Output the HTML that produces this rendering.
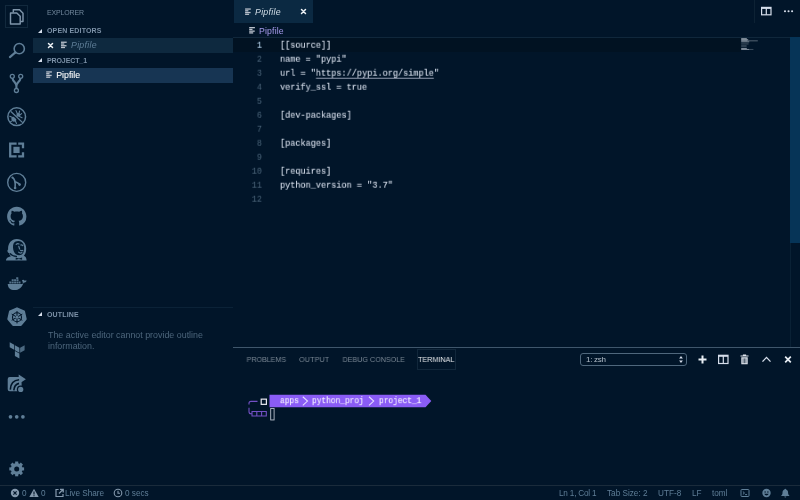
<!DOCTYPE html>
<html lang="en">
<head>
<meta charset="utf-8">
<title>Pipfile — project_1</title>
<style>
*{box-sizing:border-box;margin:0;padding:0}
html,body{width:800px;height:500px;overflow:hidden;background:#011529}
body{position:relative;font-family:"Liberation Sans",sans-serif;color:#5f7e97;font-size:8.7px;-webkit-font-smoothing:antialiased}
.abs{position:absolute}
.t{position:absolute;white-space:nowrap;line-height:1;will-change:transform;z-index:2}
svg{position:absolute;overflow:visible}
/* activity bar */
#act{left:0;top:0;width:33px;height:485px}
.focus{left:5px;top:5px;width:23px;height:23px;border:1px solid #12293d}
/* sidebar */
.hdr{font-weight:bold;font-size:7px;letter-spacing:.15px;color:#7c91a7}
.row{left:33px;width:200px;height:15px}
.tri{width:0;height:0;border-left:4px solid transparent;border-bottom:4px solid #d6deeb}
/* editor */
.code{font-family:"Liberation Mono",monospace;font-size:9.6px;color:#d6deeb;transform-origin:0 0;transform:translateY(.7px) scaleX(.8905);line-height:14px;height:14px;left:280px;-webkit-text-stroke:.12px #d6deeb}
.ln{font-family:"Liberation Mono",monospace;font-size:9.6px;color:#4b6479;transform-origin:100% 0;transform:translateY(.7px) scaleX(.8905);line-height:14px;height:14px;width:30px;text-align:right;left:232px}
/* panel */
.ptab{font-size:7.8px;color:#7a8794;top:355.900px;transform-origin:0 0;transform:scaleX(.92)}
/* terminal */
.tt{top:394px;height:14px;line-height:14px;font-family:"Liberation Mono",monospace;font-size:9.4px;color:#f4f0ff;transform-origin:0 0;transform:translateY(.15px) scaleX(.835);-webkit-text-stroke:.15px #f4f0ff}
/* status */
.st{top:490.200px;font-size:8.2px;color:#5f7e97}
</style>
</head>
<body>

<!-- ============ ACTIVITY BAR ============ -->
<div id="act" class="abs">
  <div class="abs focus"></div>
  <!-- explorer -->
  
  <!-- search -->
  
  <!-- scm -->
  
  <!-- debug -->
  
  <!-- extensions -->
  
  <!-- git graph -->
  
  <!-- github -->
  
  <!-- jenkins -->
  
  <!-- docker -->
  
  <!-- kubernetes -->
  
  <!-- terraform -->
  
  <!-- live share -->
  
  <!-- ellipsis -->
  
  <!-- gear -->
  
</div>

<!-- ============ SIDEBAR ============ -->
<div class="t" style="left:47px;top:8px;transform:translateY(.5px);font-size:7px;color:#72889d;letter-spacing:-.15px">EXPLORER</div>

<div class="abs tri" style="left:38.300px;top:28.700px"></div>
<div class="t hdr" style="left:47px;top:27.200px">OPEN EDITORS</div>
<div class="abs row" style="top:38.400px;height:14.600px;background:#0e293f"></div>

<div class="t" style="left:70.800px;top:41.400px;font-style:italic;color:#5f7e97;font-size:8.800px;letter-spacing:.26px">Pipfile</div>

<div class="abs tri" style="left:38.300px;top:58.200px"></div>
<div class="t hdr" style="left:47px;top:56.900px;letter-spacing:-.1px">PROJECT_1</div>
<div class="abs row" style="top:68px;height:14.800px;background:#173553"></div>

<div class="t" style="left:56px;top:71px;transform:translate(.2px,.4px);color:#ffffff;font-size:8.800px;-webkit-text-stroke:.08px #fff">Pipfile</div>

<div class="abs" style="left:33px;top:306.500px;width:200px;height:1px;background:#0b2237"></div>
<div class="abs tri" style="left:38px;top:312.400px"></div>
<div class="t hdr" style="left:47px;top:311.400px">OUTLINE</div>
<div class="t" style="left:48px;top:331px;font-size:8.900px;color:#4d667c">The active editor cannot provide outline</div>
<div class="t" style="left:48px;top:342.400px;font-size:8.900px;color:#4d667c">information.</div>

<!-- ============ EDITOR TABS ============ -->
<div class="abs" style="left:233.500px;top:0;width:79.500px;height:23.200px;background:#0b2942"></div>

<div class="t" style="left:255px;top:7.700px;font-style:italic;color:#d2dee7;font-size:8.800px;letter-spacing:.27px">Pipfile</div>

<!-- editor actions -->
<div class="abs" style="left:754px;top:0;width:1px;height:23px;background:#0d2234"></div>

<!-- breadcrumb -->

<div class="t" style="left:258.800px;top:26.800px;color:#a599e9;font-size:8.700px;letter-spacing:.17px">Pipfile</div>
<div class="abs" style="left:233px;top:37px;width:567px;height:1px;background:#10273b"></div>

<!-- ============ EDITOR ============ -->
<div class="abs" style="left:233px;top:38px;width:507.500px;height:14px;background:#011222"></div>
<div class="abs" style="left:789.500px;top:37px;width:1px;height:310px;background:#0a2135"></div>
<div class="abs" style="left:790px;top:37px;width:10px;height:206px;background:#063457"></div>

<div class="t ln" style="top:38px;color:#c5e4fd">1</div>
<div class="t ln" style="top:52px">2</div>
<div class="t ln" style="top:66px">3</div>
<div class="t ln" style="top:80px">4</div>
<div class="t ln" style="top:94px">5</div>
<div class="t ln" style="top:108px">6</div>
<div class="t ln" style="top:122px">7</div>
<div class="t ln" style="top:136px">8</div>
<div class="t ln" style="top:150px">9</div>
<div class="t ln" style="top:164px">10</div>
<div class="t ln" style="top:178px">11</div>
<div class="t ln" style="top:192px">12</div>

<div class="t code" style="top:38px">[[source]]</div>
<div class="t code" style="top:52px">name = "pypi"</div>
<div class="t code" style="top:66px">url = "<span style="text-decoration:underline;text-decoration-color:#939db0;text-decoration-thickness:1.300px;text-underline-offset:2.200px">https://pypi.org/simple</span>"</div>
<div class="t code" style="top:80px">verify_ssl = true</div>
<div class="t code" style="top:108px">[dev-packages]</div>
<div class="t code" style="top:136px">[packages]</div>
<div class="t code" style="top:164px">[requires]</div>
<div class="t code" style="top:178px">python_version = "3.7"</div>

<!-- text cursor (I-beam mouse) -->
<div class="abs" style="left:300px;top:82px;width:1px;height:9px;background:#0a1a28;opacity:.7"></div>

<!-- minimap -->

<!-- ============ PANEL ============ -->
<div class="abs" style="left:233px;top:346.500px;width:567px;height:1px;background:#3f566b"></div>
<div class="t ptab" style="left:246px;transform:translateX(.6px) scaleX(.92);letter-spacing:-.07px">PROBLEMS</div>
<div class="t ptab" style="left:299px;letter-spacing:.14px">OUTPUT</div>
<div class="t ptab" style="left:342px;transform:translateX(.6px) scaleX(.92);letter-spacing:-.02px">DEBUG CONSOLE</div>
<div class="abs" style="left:417px;top:349px;width:38.700px;height:20.500px;border:1px solid #11273b"></div>
<div class="t ptab" style="left:418.200px;color:#e7e9ec;letter-spacing:.02px">TERMINAL</div>

<div class="abs" style="left:580px;top:353px;width:107px;height:13px;border:1px solid #4f677c;border-radius:3px;background:#011529"></div>
<div class="t" style="left:586px;top:355.600px;font-size:8px;color:#b4bfca;letter-spacing:-.3px">1: zsh</div>

<!-- terminal prompt -->

<div class="t tt" style="left:279.700px">apps</div>
<div class="t tt" style="left:312.300px">python_proj</div>
<div class="t tt" style="left:378.500px">project_1</div>

<!-- ============ STATUS BAR ============ -->
<div class="abs" style="left:0;top:485px;width:800px;height:1px;background:#1a2b3b"></div>

<div class="t st" style="left:21.500px">0</div>

<div class="t st" style="left:40.500px">0</div>

<div class="t st" style="left:64.500px">Live Share</div>

<div class="t st" style="left:124.500px">0 secs</div>

<div class="t st" style="left:559px;letter-spacing:-.2px">Ln 1, Col 1</div>
<div class="t st" style="left:607px">Tab Size: 2</div>
<div class="t st" style="left:657.500px">UTF-8</div>
<div class="t st" style="left:692px">LF</div>
<div class="t st" style="left:712px">toml</div>

<svg width="800" height="500" viewBox="0 0 800 500" style="left:0;top:0;pointer-events:none;z-index:1">
<g transform="translate(0 0)" fill="none" stroke="#7f95aa" stroke-width="1.450" stroke-linejoin="round">
    <path d="M13.300 12.400V9.800h6.300l3.400 3.400v8.300h-2.700"/>
    <path d="M10.500 12.900h6.300l3.400 3.400v7.600h-9.700z"/>
  </g>
<g transform="translate(0 33)" fill="none" stroke="#5f7e97" stroke-width="1.600" stroke-linecap="round">
    <circle cx="19.250" cy="15.650" r="5.100"/><path d="M15.400 19.400L9.900 24.100" stroke-width="2.100"/>
  </g>
<g transform="translate(0 66)" fill="none" stroke="#5f7e97" stroke-width="1.300">
    <circle cx="12.300" cy="10.300" r="2"/><circle cx="20.700" cy="10.300" r="2"/><circle cx="16.400" cy="24.500" r="2"/>
    <path d="M12.500 12.400c.5 3.600 3.900 4 3.900 7.600v2.400M20.500 12.400c-.5 3.600-4.100 4-4.100 7.600" stroke-width="2.100"/>
  </g>
<g transform="translate(0 99)" fill="none" stroke="#5f7e97" stroke-width="1.500">
    <circle cx="16.700" cy="17.700" r="8.850"/>
    <ellipse cx="13.900" cy="20.100" rx="2.300" ry="2.700" transform="rotate(-35 13.900 20.100)" fill="#5f7e97" stroke="none"/>
    <circle cx="18.300" cy="15.900" r="1.900" fill="#5f7e97" stroke="none"/>
    <path d="M17.600 15.200l-1.600-3.600M18.800 15l.8-3M19.600 16.200l2-1.600M19.400 17.400l2.700 1.300M12.600 18.600l-2.800-1.400M12.400 21.600l-1.800 1.200M15.200 21.600l1.300 2.800" stroke-width="1.100" stroke-linecap="round"/>
    <path d="M10.100 13.500l11.600 11" stroke="#011529" stroke-width="1.100"/>
    <path d="M10.900 12.500l11.700 11.100" stroke-width="1.300"/>
  </g>
<g transform="translate(0 132)" fill="none" stroke="#5f7e97">
    <path d="M16.600 11.600H10.200V24.300H16.600M18.200 11.600h4.800v4.600M23 20.200v4.100h-4.800" stroke-width="2.300"/>
    <rect x="13.400" y="14.800" width="6.200" height="6.200" fill="#5f7e97" stroke="none"/>
  </g>
<g transform="translate(0 165)" fill="none" stroke="#5f7e97" stroke-width="1.400">
    <circle cx="16.700" cy="17.400" r="9"/>
    <path d="M12.400 12.500c2.600 1.400 3.200 5 2.700 10.400M14.700 16.200c1.400 1.400 3.600 1.400 4.800 3.200" stroke-width="1.600"/>
    <circle cx="12.400" cy="12.500" r="1.100" fill="#5f7e97" stroke="none"/><circle cx="15.100" cy="23" r="1.300" fill="#5f7e97" stroke="none"/><circle cx="19.600" cy="19.600" r="1.300" fill="#5f7e97" stroke="none"/>
  </g>
<g transform="translate(7.1 206.8) scale(1.2063)" fill="#5f7e97">
    <path d="M8 0C3.580 0 0 3.580 0 8c0 3.540 2.290 6.530 5.470 7.590.4.070.55-.17.550-.38 0-.19-.01-.82-.01-1.490-2.010.37-2.530-.49-2.690-.94-.09-.23-.48-.94-.82-1.130-.28-.15-.68-.52-.01-.53.630-.01 1.080.58 1.230.82.720 1.210 1.870.87 2.330.66.070-.52.280-.87.510-1.070-1.780-.2-3.640-.89-3.640-3.950 0-.87.310-1.590.820-2.150-.08-.2-.36-1.020.08-2.120 0 0 .67-.21 2.200.82.640-.18 1.320-.27 2-.27.680 0 1.360.09 2 .27 1.530-1.040 2.200-.82 2.200-.82.440 1.100.160 1.920.08 2.120.510.560.820 1.270.820 2.150 0 3.070-1.870 3.750-3.650 3.950.290.250.540.730.540 1.480 0 1.070-.01 1.930-.01 2.200 0 .21.150.46.550.38A8.013 8.013 0 0 0 16 8c0-4.420-3.580-8-8-8z"/>
  </g>
<g transform="translate(0 231)">
    <path d="M5.900 29.600c.2-2.400 1.800-3.600 5-4.400-1-.9-1.700-2-2-3.300-1.500-.4-2-2.400-.8-3.300-.4-5.600 3-10.500 8.700-10.500 5.600 0 9.400 4 9.400 9.600 0 3.400-.9 5.600-2.400 7 2 .6 2.700 2.400 2.800 4.900z" fill="#5f7e97"/>
    <path d="M13.700 12.200c1.600-2.400 5.400-3 8-1.200 2.200 1.600 2.800 4.800 2.400 8-.3 2.500-1.600 4.600-3.700 5.100-2.400.5-5-.8-6.300-3.200-1.200-2.400-1.600-6.500-.4-8.700z" fill="#031b30"/>
    <path d="M16.200 13.400c.8-.8 1.900-1 2.800-.5M20.800 14c.7-.3 1.500 0 2 .6M18.800 15.400l.8 2.600M20.600 19.400c.8.400 1.600.4 2.200 0M18.600 21.200c.9.900 2.300 1.100 3.300.4" stroke="#5f7e97" stroke-width="1.200" fill="none" stroke-linecap="round"/>
    <path d="M10.200 22.600c1.200 1.600 3.400 2.600 6.200 2.800" stroke="#031b30" stroke-width="1.300" fill="none" stroke-linecap="round"/>
    <path d="M15.700 26.400l3.200 1 3.200-1v2.400l-3.200-.9-3.200.9z" fill="#031b30"/>
  </g>
<g transform="translate(0 264.5)" fill="#5f7e97">
    <path d="M7.700 19.400h14.900c.5-1.200.2-2.500-.7-3.500 1-.9 2.100-.6 2.700.3.800-.3 1.500-.2 2.100.1-.6 1.400-1.800 2-3.200 1.900-1.500 4.800-4.700 7.400-9 7.400-4.200 0-6.600-2.400-6.800-6.200z"/>
    <path d="M9.300 16.900h2v2h-2zM11.700 16.900h2v2h-2zM14.100 16.900h2v2h-2zM16.500 16.900h2v2h-2zM18.900 16.900h1.600v2h-1.600zM11.700 14.700h2v1.900h-2zM14.100 14.700h2v1.900h-2zM16.500 14.700h2v1.900h-2zM16.200 12.700h2.100v1.800h-2.100z" opacity=".9"/>
  </g>
<g transform="translate(0 297)">
    <path d="M17 11.400l6.900 3.200 1.700 7.400-4.800 5.900H13.200l-4.800-5.900 1.700-7.400z" fill="#5f7e97" stroke="#5f7e97" stroke-width="2.200" stroke-linejoin="round"/>
    <circle cx="17" cy="20.200" r="4.500" fill="none" stroke="#011529" stroke-width="1.100"/>
    <path d="M17 14v12.400M11.700 17.100l10.600 6.200M22.300 17.100l-10.600 6.200" stroke="#011529" stroke-width="1"/>
    <circle cx="17" cy="20.200" r="1.400" fill="#5f7e97"/>
  </g>
<g transform="translate(0 330)" fill="#5f7e97">
    <path d="M9.700 12.300l4.500 2.500v5l-4.500-2.500zM14.900 15.200l4.500 2.500v5l-4.500-2.500zM14.900 21l4.500 2.500v5l-4.500-2.500z"/>
    <path d="M20.100 17.700l4.500-2.500v5l-4.500 2.500z" opacity=".8"/>
  </g>
<g transform="translate(0 363)">
    <path d="M9.700 13.900h9v-2.300l7.200 4.700-7.200 4.700v-1.900h2.900v9.200H9.700a2 2 0 0 1-2-2V15.900a2 2 0 0 1 2-2z" fill="#5f7e97"/>
    <path d="M10.300 26.600c.3-5.800 3.200-9.400 8.800-9.800M13.800 27.400c.3-3.800 2-6.200 5.200-7" stroke="#011529" stroke-width="1.600" fill="none"/>
    <circle cx="20.700" cy="26.400" r="3.900" fill="#011529"/><circle cx="20.700" cy="26.400" r="2.600" fill="#5f7e97"/>
  </g>
<g transform="translate(0 411.5)" fill="#5f7e97">
    <circle cx="10.500" cy="5.300" r="1.850"/><circle cx="16.700" cy="5.300" r="1.850"/><circle cx="22.900" cy="5.300" r="1.850"/>
  </g>
<g transform="translate(0 452)">
    <g transform="translate(16.700 16.900)">
      <circle r="4.200" fill="none" stroke="#5f7e97" stroke-width="3.400"/>
      <g fill="#5f7e97">
        <rect x="-1.550" y="-7.400" width="3.100" height="2.800"/>
        <rect x="-1.550" y="-7.400" width="3.100" height="2.800" transform="rotate(45)"/>
        <rect x="-1.550" y="-7.400" width="3.100" height="2.800" transform="rotate(90)"/>
        <rect x="-1.550" y="-7.400" width="3.100" height="2.800" transform="rotate(135)"/>
        <rect x="-1.550" y="-7.400" width="3.100" height="2.800" transform="rotate(180)"/>
        <rect x="-1.550" y="-7.400" width="3.100" height="2.800" transform="rotate(225)"/>
        <rect x="-1.550" y="-7.400" width="3.100" height="2.800" transform="rotate(270)"/>
        <rect x="-1.550" y="-7.400" width="3.100" height="2.800" transform="rotate(315)"/>
      </g>
    </g>
  </g>
<g transform="translate(46.5 41.5)" stroke="#eef2f6" stroke-width="1.500" stroke-linecap="round"><path d="M2 2l4 4M6 2L2 6"/></g>
<g transform="translate(61 41.6)" fill="#b9c0cb"><rect x="0" y="0" width="5.700" height="1.300"/><rect x="0" y="1.750" width="3.300" height="1.300"/><rect x="0" y="3.500" width="5.500" height="1.300"/><rect x="0" y="5.250" width="4" height="1.300"/></g>
<g transform="translate(46.2 71.3)" fill="#b9c0cb"><rect x="0" y="0" width="5.700" height="1.300"/><rect x="0" y="1.750" width="3.300" height="1.300"/><rect x="0" y="3.500" width="5.500" height="1.300"/><rect x="0" y="5.250" width="4" height="1.300"/></g>
<g transform="translate(245.1 8.4)" fill="#b9c0cb"><rect x="0" y="0" width="5.700" height="1.300"/><rect x="0" y="1.750" width="3.300" height="1.300"/><rect x="0" y="3.500" width="5.500" height="1.300"/><rect x="0" y="5.250" width="4" height="1.300"/></g>
<g transform="translate(299.5 7.5)" stroke="#eef2f6" stroke-width="1.500" stroke-linecap="round"><path d="M2 2l4 4M6 2L2 6"/></g>
<g transform="translate(761 6.6)" fill="none" stroke="#d6deeb" stroke-width="1.200"><rect x=".6" y=".8" width="9.400" height="7.400"/><path d="M.6 1.400h9.400" stroke-width="1.800"/><path d="M5.300 1v7.200"/></g>
<g transform="translate(782.5 9)" fill="#d6deeb"><circle cx="2.500" cy="2.200" r="1.050"/><circle cx="6.050" cy="2.200" r="1.050"/><circle cx="9.600" cy="2.200" r="1.050"/></g>
<g transform="translate(249.2 27)" fill="#b9c0cb"><rect x="0" y="0" width="5.700" height="1.300"/><rect x="0" y="1.750" width="3.300" height="1.300"/><rect x="0" y="3.500" width="5.500" height="1.300"/><rect x="0" y="5.250" width="4" height="1.300"/></g>
<g transform="translate(741.2 38.2)" fill="#dfe6ee">
  <rect x="0" y="0" width="5.600" height="1.050" opacity="0.68"/>
  <rect x="0" y="1.050" width="7" height="1.050" opacity="0.65"/>
  <rect x="0" y="2.100" width="6" height="1.050" opacity="0.58"/><rect x="6" y="2.100" width="10.600" height="1.050" opacity="0.36"/>
  <rect x="0" y="3.150" width="8" height="1" opacity="0.50"/>
  <rect x="0" y="5.200" width="7.400" height="1.050" opacity="0.29"/>
  <rect x="0" y="7.300" width="5.400" height="1" opacity="0.40"/>
  <rect x="0" y="9.700" width="5.600" height="1.050" opacity="0.58"/>
  <rect x="0" y="10.750" width="8" height="1.050" opacity="0.54"/><rect x="8" y="10.750" width="4.200" height="1.050" opacity="0.25"/>
</g>
<g transform="translate(678.5 355.5)" fill="#d6deeb"><path d="M2.500 .4L4.400 3H.6zM2.500 7.600L4.400 5H.6z"/></g>
<g transform="translate(697.5 354.5)" stroke="#e8eef4" stroke-width="2"><path d="M5 1v8M1 5h8"/></g>
<g transform="translate(718 354.5)" fill="none" stroke="#d6deeb" stroke-width="1.200"><rect x=".6" y=".8" width="9.400" height="8.200"/><path d="M.6 1.400h9.400" stroke-width="1.800"/><path d="M5.300 1v8"/></g>
<g transform="translate(739.5 354)" fill="#dde3ec"><path d="M3.400 .4h3.200v1H9v1.200H1V1.400h2.400zM1.800 3.300h6.400v6.900H1.800z"/><path d="M3.600 4.400v4.800M5 4.400v4.800M6.400 4.400v4.800" stroke="#011529" stroke-width=".6"/></g>
<g transform="translate(761.5 356)" fill="none" stroke="#d6deeb" stroke-width="1.300"><path d="M1 5.600l4-4.200 4 4.200"/></g>
<g transform="translate(784 355.5)" stroke="#e8eef4" stroke-width="1.700" stroke-linecap="butt"><path d="M1.200 1.200l5.600 5.600M6.800 1.200L1.200 6.800"/></g>
<g transform="translate(245 392.15)">
  <path d="M24.500 2.500h156l5.800 6.250-5.800 6.250h-156z" fill="#8a5cf5"/>
  <path d="M12.500 9.200H6a2 2 0 0 0-2 2v1.200" fill="none" stroke="#7350c4" stroke-width="1.100"/>
  <path d="M4 15.600v4a2 2 0 0 0 2 2h1" fill="none" stroke="#7350c4" stroke-width="1.100"/>
  <path d="M7 19.300h14.300v4.600H7zM11.800 19.300v4.600M16.600 19.300v4.600" fill="none" stroke="#7350c4" stroke-width="1.100"/>
  <rect x="16.200" y="7" width="5.200" height="5.200" fill="#011529" stroke="#e8e8f0" stroke-width="1.200"/>
  <path d="M57.800 4.600l4.700 4.300-4.700 4.300M124 4.600l4.700 4.300-4.700 4.300" fill="none" stroke="#e4dcff" stroke-width="1.050"/>
  <rect x="25.700" y="16.400" width="3.400" height="11.400" fill="none" stroke="#b8c0cc" stroke-width=".9"/>
</g>
<g transform="translate(10.5 488.5)"><circle cx="4.500" cy="4.500" r="4.200" fill="#8599ad"/><path d="M2.900 2.900l3.200 3.200M6.100 2.900L2.900 6.100" stroke="#011529" stroke-width="1.200"/></g>
<g transform="translate(29 488.5)"><path d="M5 .3l4.700 8.300H.3z" fill="#8599ad"/><path d="M5 3v3M5 6.800v1" stroke="#011529" stroke-width="1.100"/></g>
<g transform="translate(55 488.5)" fill="none" stroke="#8599ad" stroke-width="1.200"><path d="M3.600 1H1v7h7V5.600"/><path d="M4 5l4-4M5 .8h3.200V4" stroke-width="1.300"/></g>
<g transform="translate(113.5 488.5)" fill="none" stroke="#8599ad" stroke-width="1.100"><circle cx="4.500" cy="4.500" r="3.800"/><path d="M4.500 2.200v2.500h2"/></g>
<g transform="translate(740.5 489)" fill="none" stroke="#5f7e97" stroke-width="1"><rect x=".5" y=".5" width="8" height="7" rx=".8"/><path d="M2.400 2.600L4 4 2.400 5.400M4.600 5.600h2"/></g>
<g transform="translate(762 488.5)"><circle cx="4.500" cy="4.500" r="4.200" fill="#5f7e97"/><circle cx="3.100" cy="3.500" r=".7" fill="#011529"/><circle cx="5.900" cy="3.500" r=".7" fill="#011529"/><path d="M2.300 5.300a2.300 2.300 0 0 0 4.400 0z" fill="#011529"/></g>
<g transform="translate(780.8 488.5)" fill="#5f7e97"><path d="M4.500 .3c.5 0 .8.300.8.800 1.400.5 2 1.600 2 3.100 0 1.400.5 2.100 1.200 2.700v.5H.5v-.5c.7-.6 1.200-1.300 1.200-2.700 0-1.500.6-2.600 2-3.100 0-.5.300-.8.800-.8zM3.500 7.900h2a1 1 0 0 1-2 0z"/></g>
</svg>

</body>
</html>
